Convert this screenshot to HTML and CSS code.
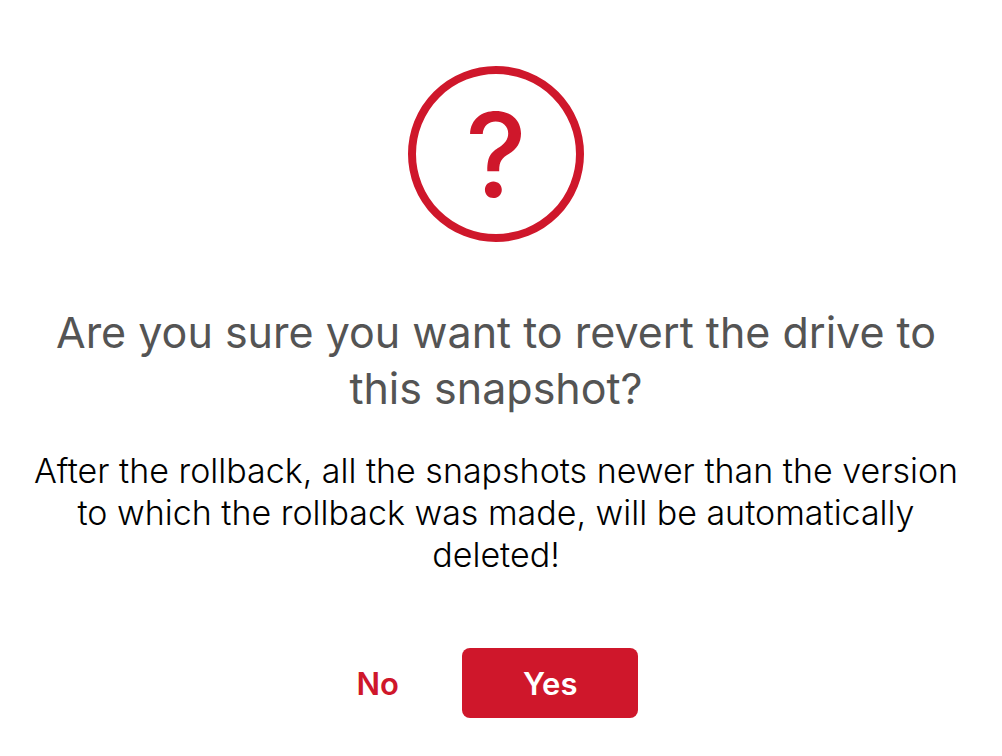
FILE: index.html
```html
<!DOCTYPE html>
<html lang="en">
<head>
<meta charset="utf-8">
<meta name="viewport" content="width=device-width, initial-scale=1">
<title>Revert drive</title>
<link rel="stylesheet" href="styles.css">
</head>
<body>
<main class="dialog" role="alertdialog" aria-labelledby="title" aria-describedby="message">
<div class="icon" aria-hidden="true">?</div>
<h1 class="title" id="title">Are you sure you want to revert the drive to this snapshot?</h1>
<p class="message" id="message">After the rollback, all the snapshots newer than the version to which the rollback was made, will be automatically deleted!</p>
<div class="actions">
<button class="button button-no" type="button">No</button>
<button class="button button-yes" type="button">Yes</button>
</div>
</main>
</body>
</html>
```
FILE: styles.css
```css
* { box-sizing: border-box; }
body {
  margin: 0;
  background: #fff;
  font-family: Inter, "Liberation Sans", sans-serif;
}
.dialog {
  display: flex;
  flex-direction: column;
  align-items: center;
  padding: 66px 28px 38px 18px;
  text-align: center;
}
.icon {
  display: flex;
  align-items: center;
  justify-content: center;
  width: 176px;
  height: 176px;
  padding-top: 2px;
  border: 8px solid #cf172b;
  border-radius: 50%;
  color: #cf172b;
  font-size: 116px;
  font-weight: 500;
  line-height: 160px;
}
.title {
  margin: 62px 0 0;
  color: #545454;
  font-size: 43px;
  font-weight: 400;
  line-height: 56px;
}
.message {
  margin: 34px 0 0;
  color: #000;
  font-size: 34px;
  font-weight: 300;
  line-height: 42px;
}
.actions {
  display: flex;
  gap: 2px;
  margin-top: 72px;
  padding-right: 58px;
}
.button {
  height: 70px;
  padding: 0 61px;
  border: 0;
  border-radius: 8px;
  font: 600 31px Inter, "Liberation Sans", sans-serif;
}
.button-no { background: #fff; color: #cf172b; }
.button-yes { background: #cf172b; color: #fff; }
```
